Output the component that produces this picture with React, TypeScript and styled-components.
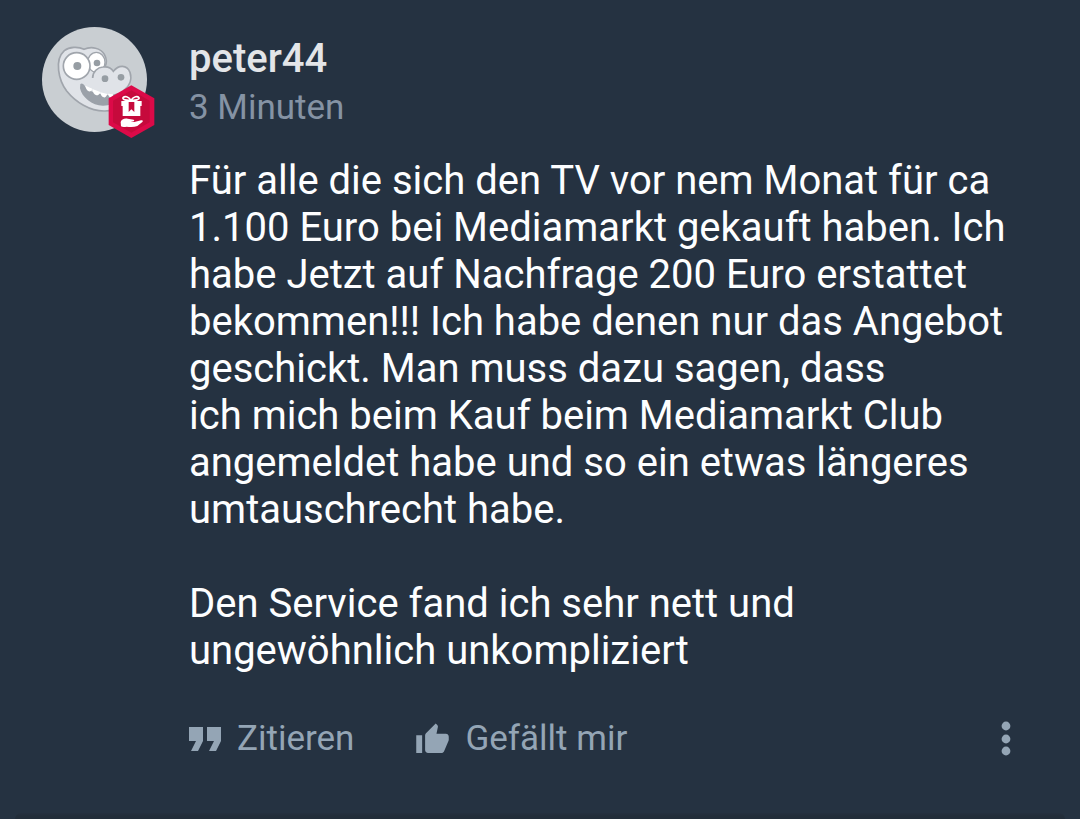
import React from 'react';
import styled, { createGlobalStyle } from 'styled-components';

const GlobalStyle = createGlobalStyle`
  body {
    margin: 0;
    background: #253241;
    font-family: Roboto, "Liberation Sans", sans-serif;
  }
`;

const Page = styled.main`
  min-height: 100vh;
  display: flex;
  flex-direction: column;
`;

const Comment = styled.article`
  flex: 1;
  display: flex;
  align-items: flex-start;
  gap: 42px;
  padding: 27px 42px;
`;

const Avatar = styled.div`
  position: relative;
  flex: none;
  width: 105px;
  height: 105px;
`;

const Portrait = styled.svg`
  display: block;
  width: 100%;
  height: 100%;
`;

const Badge = styled.svg`
  position: absolute;
  right: -8px;
  bottom: -6px;
  width: 47px;
  height: 53px;
`;

const Content = styled.div`
  flex: 1;
  min-width: 0;
  padding-top: 8px;
`;

const Name = styled.h2`
  margin: 0;
  font-size: 40px;
  line-height: 48px;
  font-weight: 500;
  color: #e3e5e8;
`;

const Time = styled.time`
  display: block;
  font-size: 35px;
  line-height: 50px;
  color: #8593a4;
`;

const Message = styled.div`
  display: flex;
  flex-direction: column;
  margin-top: 24px;
  font-size: 40px;
  line-height: 47px;
  color: #fdfeff;
`;

const Paragraph = styled.p`
  margin: 0;

  & + & {
    margin-top: 47px;
  }
`;

const Actions = styled.footer`
  display: flex;
  align-items: center;
  gap: 62px;
  margin-top: 40px;
`;

const Action = styled.button`
  display: flex;
  align-items: center;
  gap: 16px;
  padding: 0;
  border: 0;
  background: none;
  font-family: inherit;
  font-size: 35px;
  line-height: 50px;
  color: #94a5b5;
  cursor: pointer;
`;

const MenuButton = styled(Action)`
  margin-left: auto;
  padding: 0 27px;
`;

const NextCardShadow = styled.div`
  height: 6px;
  margin: 0 15px;
  border-radius: 6px 6px 0 0;
  background: linear-gradient(#25303f, #222d39 50%);
`;

const GatorPortrait = () => (
  <Portrait viewBox="36 36 315 315" role="img" aria-label="peter44">
    <circle cx="193.500" cy="193.500" r="157.500" fill="#c9ced2" />
    <path
      d="M103 107C118 95 145 94 162 103C184 93 212 99 223 118C230 130 231 143 225 156L288 214C288 250 262 290 222 288C180 288 137 262 110 228C86 196 72 135 103 107Z"
      fill="#e0e3e8"
      stroke="#a0a5ac"
      strokeWidth="5"
    />
    <ellipse cx="199" cy="142" rx="26" ry="30" fill="#fff" stroke="#a0a5ac" strokeWidth="4" />
    <path
      d="M190 192C187 172 203 157 219 156Q240 153 250 169C265 149 291 148 300 172C307 194 298 215 280 228L247 238L200 222Z"
      fill="#e0e3e8"
    />
    <path
      d="M188 189C188 170 203 157 219 156Q240 153 250 169C265 149 291 148 300 172C307 194 298 215 280 228"
      fill="none"
      stroke="#a0a5ac"
      strokeWidth="5"
    />
    <path
      d="M151 207Q157 202 163 211C172 228 201 239 242 241L264 234V252C252 264 240 272 220 272C188 273 155 247 150 220Z"
      fill="#9ba1a9"
    />
    <path
      d="M166 212L187 221Q184 231 176 229Q168 225 166 212ZM187 222L211 231Q207 242 199 241Q189 238 187 222ZM211 232L232 237Q228 249 221 247Q213 245 211 232ZM234 236L250 238Q247 250 241 248Q235 246 234 236Z"
      fill="#fff"
    />
    <circle cx="140" cy="153" r="40" fill="#fff" stroke="#a0a5ac" strokeWidth="5" />
    <circle cx="142" cy="153" r="12" fill="#969da3" />
    <circle cx="201" cy="144" r="10" fill="#969da3" />
    <circle cx="225" cy="191" r="10" fill="#969da3" />
    <circle cx="273" cy="187" r="10" fill="#969da3" />
  </Portrait>
);

const GiftBadge = () => (
  <Badge viewBox="235 208 141 159" aria-hidden="true">
    <path d="M305 209L374 248V328L305 367L237 328V248Z" fill="#dc0a48" />
    <path d="M305 224L360 255V320L305 351L250 320V255Z" fill="#c60a3c" />
    <path
      fill="#fff"
      fillRule="evenodd"
      d="M275 256H336V271H332V301H279V271H275ZM297 259V289L305 281L314 289V259Z"
    />
    <path
      d="M304 254C295 242 286 240 280 246C278 252 290 255 304 254C317 255 330 252 328 246C323 240 313 242 304 254Z"
      fill="none"
      stroke="#fff"
      strokeWidth="5"
    />
    <path
      d="M273 319C275 311 284 307 294 309L312 312Q316 314 312 317L303 318L314 319L334 314Q341 313 339 318L323 331Q310 336 291 333Q279 335 274 332Z"
      fill="#fff"
    />
  </Badge>
);

const QuoteIcon = () => (
  <svg width="32" height="26" viewBox="0 0 32 26" fill="currentColor" aria-hidden="true">
    <path d="M0 1H14V15L9 25H2L7 15H0ZM18 1H32V15L27 25H20L25 15H18Z" />
  </svg>
);

const ThumbIcon = () => (
  <svg width="33" height="34" viewBox="1 0 22 23" fill="currentColor" aria-hidden="true">
    <path d="M1 21h4V9H1v12zm22-11c0-1.100-.9-2-2-2h-6.310l.95-4.570.03-.32c0-.41-.17-.79-.44-1.060L14.170 1 7.590 7.590C7.220 7.950 7 8.450 7 9v10c0 1.100.9 2 2 2h9c.83 0 1.540-.5 1.840-1.220l3.020-7.050c.09-.23.14-.47.14-.73v-2z" />
  </svg>
);

const MoreIcon = () => (
  <svg width="10" height="36" viewBox="0 0 10 36" fill="currentColor" aria-hidden="true">
    <circle cx="5" cy="5" r="4.400" />
    <circle cx="5" cy="18" r="4.400" />
    <circle cx="5" cy="30" r="4.400" />
  </svg>
);

export default function App() {
  return (
    <Page>
      <GlobalStyle />
      <Comment>
        <Avatar>
          <GatorPortrait />
          <GiftBadge />
        </Avatar>
        <Content>
          <Name>peter44</Name>
          <Time>3 Minuten</Time>
          <Message>
            <Paragraph>
              Für alle die sich den TV vor nem Monat für ca 1.100 Euro bei Mediamarkt gekauft haben. Ich
              habe Jetzt auf Nachfrage 200 Euro erstattet bekommen!!! Ich habe denen nur das Angebot
              geschickt. Man muss dazu sagen, dass ich{'\u00a0'}mich beim Kauf beim Mediamarkt Club
              angemeldet habe und so ein etwas längeres umtauschrecht habe.
            </Paragraph>
            <Paragraph>Den Service fand ich sehr nett und ungewöhnlich unkompliziert</Paragraph>
          </Message>
          <Actions>
            <Action type="button">
              <QuoteIcon />
              Zitieren
            </Action>
            <Action type="button">
              <ThumbIcon />
              Gefällt mir
            </Action>
            <MenuButton type="button" aria-label="Mehr">
              <MoreIcon />
            </MenuButton>
          </Actions>
        </Content>
      </Comment>
      <NextCardShadow />
    </Page>
  );
}
